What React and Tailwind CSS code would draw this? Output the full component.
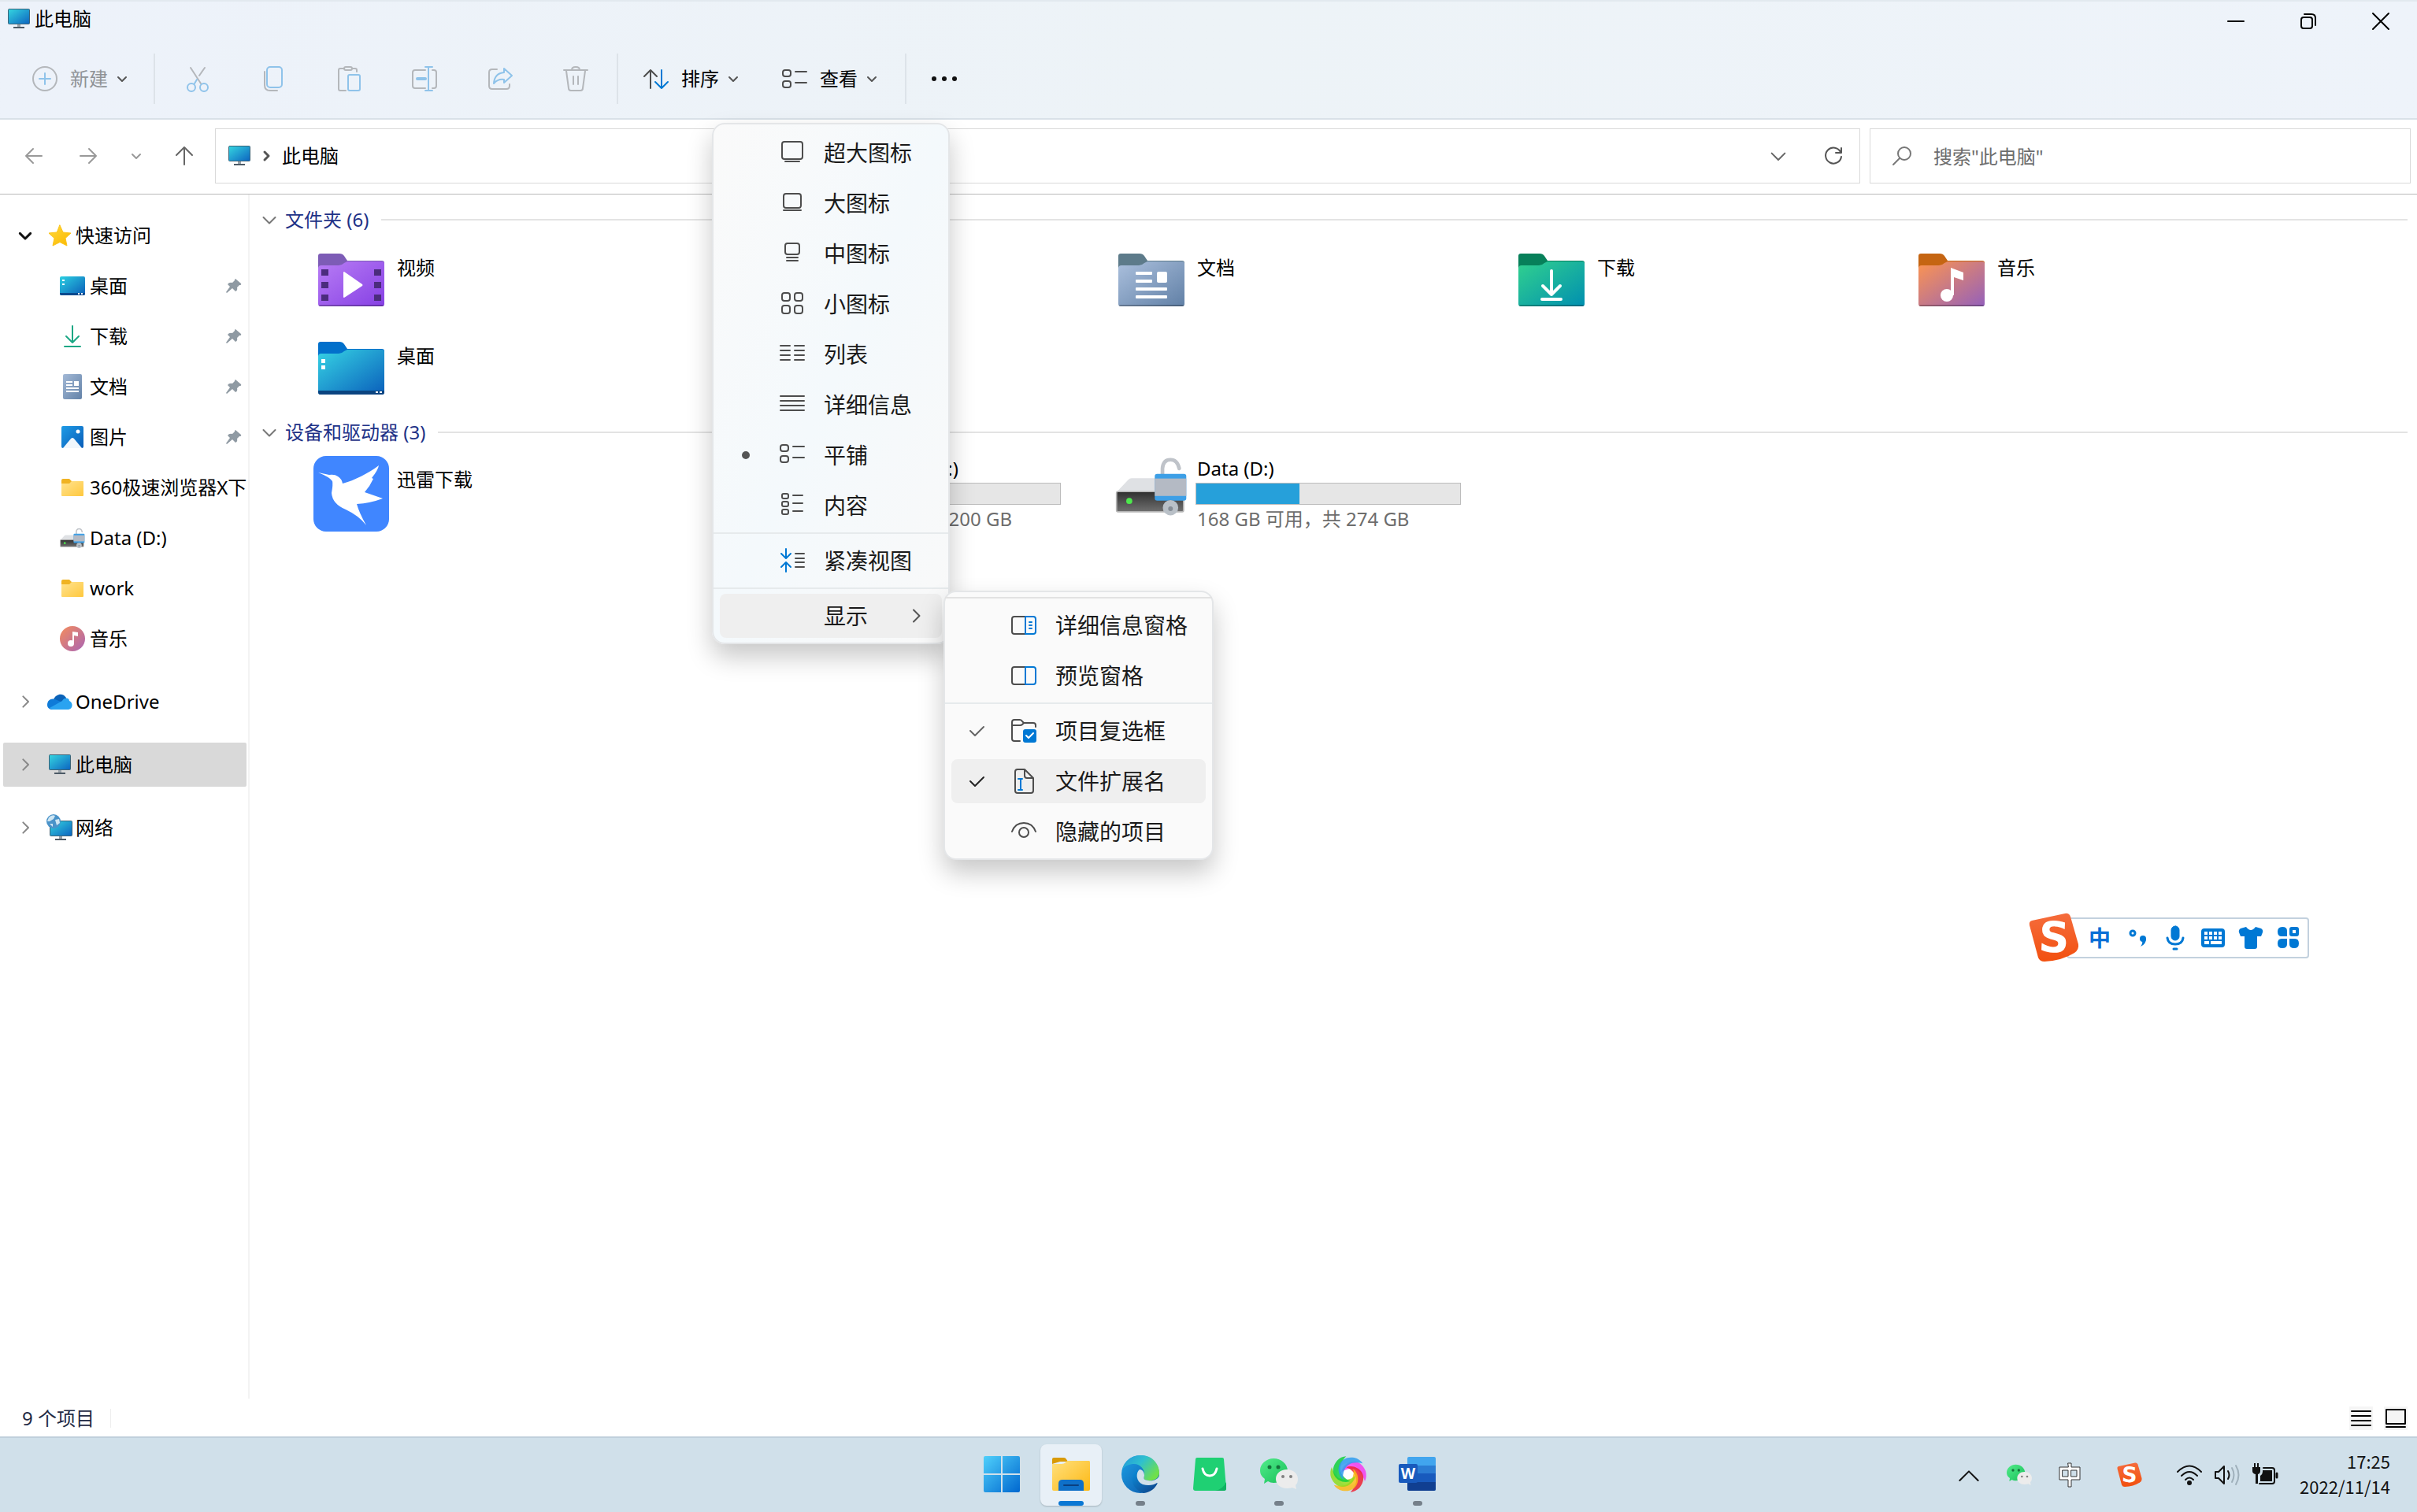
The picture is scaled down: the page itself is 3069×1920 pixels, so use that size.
import React, { useState } from "react";

// Small wrapper so every icon shares the same stroke defaults.
const Icon = ({ w = 32, h = w, vb, color = "#4d4d4d", sw = 2, children }) => (
  <svg
    width={w}
    height={h}
    viewBox={vb || `0 0 ${w} ${h}`}
    fill="none"
    stroke={color}
    strokeWidth={sw}
    strokeLinecap="round"
    strokeLinejoin="round"
    className="shrink-0 overflow-visible"
    aria-hidden="true"
  >
    {children}
  </svg>
);

const BLUE = "#0078d4";
const PALE = "#8fc3ea";
const GREY = "#b4b7bb";

const Chevron = ({ dir = "down", size = 12, color = "#555", sw = 2 }) => {
  const paths = {
    down: "M1 4 L6 9 L11 4",
    right: "M4 1 L9 6 L4 11",
    up: "M1 9 L6 4 L11 9",
  };
  return (
    <Icon w={size} vb="0 0 12 12" color={color} sw={(sw * 12) / size}>
      <path d={paths[dir]} />
    </Icon>
  );
};

const Gradient = ({ id, from, to }) => (
  <linearGradient id={id} x1="0" y1="0" x2="1" y2="1">
    <stop offset="0" stopColor={from} />
    <stop offset="1" stopColor={to} />
  </linearGradient>
);

/* ---------- system icons ---------- */

const Monitor = ({ id }) => (
  <Icon w={28} h={26} sw={1} color="none">
    <Gradient id={id} from="#35d6e0" to="#0c63c0" />
    <rect x="0.5" y="0.5" width="27" height="19" rx="1" fill={`url(#${id})`} stroke="#3c6478" />
    <rect x="12" y="20" width="4" height="3" fill="#9aa3aa" />
    <rect x="7" y="23" width="14" height="2" fill="#4c5a66" />
  </Icon>
);

const Star = () => (
  <Icon w={30} h={28} color="none">
    <Gradient id="star" from="#ffd93b" to="#fbb800" />
    <path
      d="M15 1 L19 10 L29 11 L22 17.500 L24 27 L15 22.500 L6 27 L8 17.500 L1 11 L11 10 Z"
      fill="url(#star)"
      stroke="#fcc419"
      strokeWidth="1"
    />
  </Icon>
);

const DesktopIcon = () => (
  <Icon w={32} h={25} color="none">
    <Gradient id="desk" from="#2bd0e2" to="#0b5cb8" />
    <rect width="32" height="24" rx="2" fill="url(#desk)" />
    <path d="M0 21 H32 V22 Q32 24 30 24 H2 Q0 24 0 22Z" fill="#0a4a8e" />
    <path d="M3 4h3v2h-3z M3 9h3v2h-3z M23 21h2v2h-2z M27 21h2v2h-2z" fill="#fff" />
  </Icon>
);

const DownloadIcon = () => (
  <Icon w={32} h={28} color="#1ba784" sw={2}>
    <path d="M16 1 V22 M8 14 L16 22 L24 14 M6 27 H26" />
  </Icon>
);

const DocIcon = () => (
  <Icon w={32} h={32} color="none">
    <Gradient id="doc" from="#a3b9d6" to="#6382a8" />
    <rect x="4" y="0" width="24" height="32" rx="2" fill="url(#doc)" />
    <path d="M8 9h8v2h-8z M8 13h8v2h-8z M8 17h16v2h-16z M8 21h16v2h-16z M18 9h6v6h-6z" fill="#fff" />
  </Icon>
);

const PictureIcon = () => (
  <Icon w={32} h={28} color="none">
    <Gradient id="pic" from="#1e9be6" to="#0a5db8" />
    <rect x="2" width="28" height="28" rx="2" fill="url(#pic)" />
    <path d="M4 28 L14 16 Q16 14 18 16 L28 28 Z" fill="#f1f7fc" />
    <circle cx="23" cy="7" r="2.500" fill="#fff" />
  </Icon>
);

const FolderSmall = () => (
  <Icon w={32} h={24} color="none">
    <Gradient id="fold" from="#ffe391" to="#ffc83d" />
    <path d="M2 3 Q2 1 4 1 H12 L15 4 H28 Q30 4 30 6 V12 H2Z" fill="#f0b323" />
    <path d="M2 7 H12 L15 4 H29 Q30 4 30 5 V22 Q30 23 29 23 H3 Q2 23 2 22Z" fill="url(#fold)" />
  </Icon>
);

const MusicIcon = () => (
  <Icon w={32} color="none">
    <Gradient id="mus" from="#f58d5c" to="#a964b4" />
    <circle cx="16" cy="16" r="16" fill="url(#mus)" />
    <circle cx="14" cy="22" r="4" fill="#fff" />
    <path d="M16 22 V7 L23 8 V13 L18 12 V22Z" fill="#fff" />
  </Icon>
);

const OneDrive = () => (
  <Icon w={32} h={22} color="none">
    <path d="M8 8 C11 1 20 -1 24 6 L24 14 L4 16 Z" fill="#0a62b8" />
    <path d="M0 15 C0 9 5 6 10 8 L24 14 L10 21 H7 C3 21 0 19 0 15Z" fill="#0f7bd8" />
    <path d="M19 10 C22 5 28 6 28 10 C33 12 33 20 27 21 H7 C5 21 4 20 3 19Z" fill="#2aa3f0" />
  </Icon>
);

const NetworkIcon = () => (
  <Icon w={34} h={34} color="none">
    <Gradient id="net" from="#35d6e0" to="#0c63c0" />
    <rect x="4.500" y="8.500" width="28" height="19" rx="1" fill="url(#net)" stroke="#3c6478" strokeWidth="1" />
    <rect x="16" y="28" width="4" height="3" fill="#9aa3aa" />
    <rect x="11" y="31" width="14" height="2" fill="#4c5a66" />
    <circle cx="9" cy="9" r="9" fill="#4a93c9" />
    <path d="M3 4 Q7 0 11 2 L9 6 L4 9 L1 9 Z M11 7 L16 6 L17 11 L13 14 Z M4 12 L8 12 L8 16 Z" fill="#cfe6f3" />
  </Icon>
);

const Pin = () => (
  <Icon w={20} color="none">
    <path
      d="M12 1 L19 7 Q20 9 17 9 L14 12 Q15 16 12 17 L8 13 L1 19 L0 18 L5 11 L2 8 Q4 5 8 6 L11 3 Q11 1 12 1Z"
      fill="#8f9aa3"
    />
  </Icon>
);

// Drive with an open padlock, used in the tree and on the tile.
const DriveIcon = ({ w, h, id }) => (
  <Icon w={w} h={h} vb="1255 990 216 176" color="none">
    <linearGradient id={id} x1="0" y1="0" x2="0" y2="1">
      <stop offset="0" stopColor="#2f2f2f" />
      <stop offset="1" stopColor="#707070" />
    </linearGradient>
    <path d="M1259 1097 L1294 1060 Q1298 1055 1304 1055 H1420 L1459 1097Z" fill="#dfe1e4" />
    <rect x="1259" y="1095" width="200" height="60" rx="4" fill={`url(#${id})`} stroke="#b5b5b5" strokeWidth="4" />
    <circle cx="1297" cy="1123" r="9" fill="#4de84d" />
    <path d="M1396 1044 V1026 Q1398 1000 1420 1000 Q1440 1000 1446 1026" stroke="#bfc3c9" strokeWidth="11" />
    <rect x="1373" y="1042" width="94" height="80" rx="7" fill="#3d9fe6" />
    <rect x="1373" y="1056" width="94" height="52" fill="#b4bac4" />
    <circle cx="1420" cy="1143" r="23" fill="#b9c0c7" />
    <circle cx="1420" cy="1146" r="7" fill="#858d96" />
  </Icon>
);

/* ---------- big folders ---------- */

const folderColors = {
  video: ["#7d5cb6", "#b87df5", "#8640e4"],
  picture: ["#0b62bd", "#35a8ea", "#0b62bd"],
  doc: ["#5d7b8a", "#abc0dd", "#6180a6"],
  download: ["#07805a", "#31d18e", "#008fb0"],
  music: ["#c56512", "#fd9550", "#9460bb"],
  desktop: ["#0270cb", "#36d3e4", "#0a5fbb"],
};

const folderArt = {
  video: (
    <>
      <path
        d="M4 20h9v8h-9z M4 36h9v8h-9z M4 52h9v8h-9z M71 20h9v8h-9z M71 36h9v8h-9z M71 52h9v8h-9z"
        fill="#4b2c7d"
      />
      <path d="M33 23 L56 39 Q57 40 56 41 L33 56 Q32 56 32 55 V24Q32 23 33 23Z" fill="#fff" />
    </>
  ),
  picture: (
    <>
      <path d="M18 60 L38 36 Q42 32 46 36 L66 60Z" fill="#fff" />
      <circle cx="60" cy="28" r="5" fill="#fff" />
    </>
  ),
  doc: (
    <g fill="#fff">
      <rect x="22" y="23" width="21" height="4" rx="1" />
      <rect x="22" y="33" width="21" height="4" rx="1" />
      <rect x="22" y="43" width="40" height="4" rx="1" />
      <rect x="22" y="53" width="40" height="4" rx="1" />
      <rect x="49" y="23" width="13" height="14" rx="2" />
    </g>
  ),
  download: (
    <path d="M42 22 V52 M31 41 L42 52 L53 41 M30 58 H54" stroke="#fff" strokeWidth="4" />
  ),
  music: (
    <>
      <ellipse cx="36" cy="53" rx="8" ry="8" fill="#fff" />
      <path d="M41 53 V18 L57 24 V34 L45 30 V53Z" fill="#fff" />
    </>
  ),
  desktop: (
    <>
      <path d="M0 62 H84 V64 Q84 67 81 67 H3 Q0 67 0 64Z" fill="#0b4480" />
      <path d="M4 22h5v5h-5z M4 30h5v5h-5z M73 63h3v2h-3z M78 63h3v2h-3z" fill="#fff" />
    </>
  ),
};

const Folder = ({ kind }) => {
  const [tab, from, to] = folderColors[kind];
  return (
    <Icon w={84} h={68} color="none">
      <Gradient id={`big-${kind}`} from={from} to={to} />
      <path d="M0 3 Q0 0 3 0 H27 Q31 0 33 3 L37 9 H81 Q84 9 84 12 V30 H0Z" fill={tab} />
      <path
        d="M0 19 Q0 15 4 15 H26 Q30 15 33 12 L37 10 H81 Q84 10 84 13 V64 Q84 67 81 67 H3 Q0 67 0 64Z"
        fill={`url(#big-${kind})`}
      />
      <path d="M2 66 H82" stroke="#000" strokeOpacity="0.25" strokeWidth="2" />
      {folderArt[kind]}
    </Icon>
  );
};

const Thunder = () => (
  <Icon w={96} color="none">
    <rect width="96" height="96" rx="16" fill="#4086ff" />
    <path
      d="M6 21 L20 24 Q27 23 31 26 Q36 29 37 35 C52 31 70 22 83 12 Q82 18 74 28 L76 29 Q72 38 65 46 L88 54 Q72 60 55 61 Q58 72 67 88 Q58 76 41 68 Q24 61 23 47 Q25 36 24 32 Q21 27 6 21Z"
      fill="#fff"
    />
  </Icon>
);

/* ---------- toolbar ---------- */

const CutIcon = () => (
  <Icon color={GREY}>
    <path d="M7 2 L20 22 M25 2 L18 12" />
    <path d="M15 17 L12 22" stroke={PALE} />
    <circle cx="8" cy="27" r="5" stroke={PALE} />
    <circle cx="24" cy="27" r="5" stroke={PALE} />
  </Icon>
);

const CopyIcon = () => (
  <Icon color={GREY}>
    <path d="M5 7 V24 Q5 31 12 31 H21" />
    <rect x="8" y="1" width="19" height="26" rx="4" stroke={PALE} />
  </Icon>
);

const PasteIcon = () => (
  <Icon color={GREY}>
    <path d="M10 3 H5 Q3 3 3 5 V29 Q3 31 5 31 H12 M20 3 H24 Q26 3 26 5 V7" />
    <rect x="10" y="1" width="10" height="4" rx="2" />
    <rect x="15" y="11" width="15" height="20" rx="2" stroke={PALE} />
  </Icon>
);

const RenameIcon = () => (
  <Icon color={GREY}>
    <path d="M17 5 H4 Q1 5 1 8 V25 Q1 28 4 28 H17 M26 5 H28 Q31 5 31 8 V25 Q31 28 28 28 H26" />
    <path d="M21 1 V31 M17 1 H26 M17 31 H26" stroke={PALE} />
    <path d="M7 16 H17" stroke={PALE} strokeWidth="4" />
  </Icon>
);

const ShareIcon = () => (
  <Icon color={GREY}>
    <path d="M12 4 H6 Q2 4 2 8 V25 Q2 29 6 29 H24 Q28 29 28 25 V23" />
    <path d="M21 3 L31 12 L21 21 V17 Q13 16 8 22 Q9 9 21 8 Z" stroke={PALE} />
  </Icon>
);

const TrashIcon = () => (
  <Icon color={GREY}>
    <path d="M1 5 H31 M4 6 L7 28 Q7 31 10 31 H22 Q25 31 25 28 L28 6 M11 5 Q11 1 16 1 Q21 1 21 5 M13 13 V23 M19 13 V23" />
  </Icon>
);

const SortIcon = () => (
  <Icon>
    <path d="M9 28 V5 M1 13 L9 5 L17 13" />
    <path d="M23 5 V28 M15 20 L23 28 L31 20" stroke={BLUE} />
  </Icon>
);

const TilesIcon = () => (
  <Icon>
    <rect x="1" y="5" width="10" height="8" rx="3" />
    <rect x="1" y="19" width="10" height="8" rx="3" />
    <path d="M17 7 H31 M17 21 H31" />
  </Icon>
);

const fileActions = [
  ["剪切", CutIcon],
  ["复制", CopyIcon],
  ["粘贴", PasteIcon],
  ["重命名", RenameIcon],
  ["共享", ShareIcon],
  ["删除", TrashIcon],
];

const Divider = () => <div className="h-16 w-0.5 bg-[#dde3e9]" />;

const TitleBar = () => (
  <div className="flex h-12 items-center justify-between">
    <div className="flex items-center gap-1.5 pl-2.5">
      <Monitor id="mon-title" />
      <h1 className="leading-8">此电脑</h1>
    </div>
    <div className="flex pt-1.5">
      <button className="flex h-10 w-[92px] items-center justify-center" aria-label="最小化">
        <Icon w={20} color="#000">
          <path d="M0 10 H20" />
        </Icon>
      </button>
      <button className="flex h-10 w-[92px] items-center justify-center" aria-label="还原">
        <Icon w={20} color="#000">
          <rect x="1" y="5" width="14" height="14" rx="3" />
          <path d="M5 1 H14 Q19 1 19 6 V15" />
        </Icon>
      </button>
      <button className="flex h-10 w-[92px] items-center justify-center" aria-label="关闭">
        <Icon w={20} color="#000">
          <path d="M0 0 L20 20 M20 0 L0 20" />
        </Icon>
      </button>
    </div>
  </div>
);

const Toolbar = () => (
  <div className="flex h-[102px] items-center pt-px pl-[41px]">
    <button className="flex items-center gap-4 text-[#8f9296]">
      <Icon color={GREY}>
        <circle cx="16" cy="16" r="15" />
        <path d="M16 9 V23 M9 16 H23" stroke={PALE} />
      </Icon>
      <span className="flex items-center gap-3 leading-8">
        新建 <Chevron />
      </span>
    </button>
    <div className="flex items-center pl-[34px]">
      <Divider />
      <div className="flex pr-1 pl-1.5">
        {fileActions.map(([label, Glyph]) => (
          <button key={label} aria-label={label} className="flex w-24 justify-center">
            <Glyph />
          </button>
        ))}
      </div>
      <Divider />
    </div>
    <div className="flex items-center gap-14 pr-9 pl-8">
      <button className="flex items-center gap-4">
        <SortIcon />
        <span className="flex items-center gap-3 leading-8">
          排序 <Chevron />
        </span>
      </button>
      <button className="flex items-center gap-4">
        <TilesIcon />
        <span className="flex items-center gap-3 leading-8">
          查看 <Chevron />
        </span>
      </button>
    </div>
    <Divider />
    <button aria-label="更多" className="flex w-24 justify-center">
      <Icon color="none">
        <circle cx="3" cy="16" r="3" fill="#111" />
        <circle cx="16" cy="16" r="3" fill="#111" />
        <circle cx="29" cy="16" r="3" fill="#111" />
      </Icon>
    </button>
  </div>
);

/* ---------- address row ---------- */

const AddressRow = ({ query, setQuery }) => (
  <div className="flex h-[95px] items-center border-b border-[#b9b9b9] bg-white pr-2 pb-0.5">
    <div className="flex w-[273px] items-center pl-8">
      <button aria-label="后退" className="w-[69px]">
        <Icon w={22} color="#999">
          <path d="M1 11 H21 M10 2 L1 11 L10 20" />
        </Icon>
      </button>
      <button aria-label="前进" className="w-[66px]">
        <Icon w={22} color="#999">
          <path d="M1 11 H21 M12 2 L21 11 L12 20" />
        </Icon>
      </button>
      <button aria-label="最近浏览的位置" className="w-14">
        <Chevron color="#999" />
      </button>
      <button aria-label="上移">
        <Icon w={22} h={24} color="#666">
          <path d="M11 23 V1 M1 11 L11 1 L21 11" />
        </Icon>
      </button>
    </div>
    <div className="flex h-[70px] flex-1 items-center justify-between border border-[#d9d9d9] pr-[21px] pl-4">
      <div className="flex items-center gap-3.5">
        <Monitor id="mon-addr" />
        <Chevron dir="right" color="#555" sw={3} />
        <a href="#pc" className="leading-8">
          此电脑
        </a>
      </div>
      <div className="flex items-center gap-12">
        <button aria-label="以前的位置">
          <Chevron size={20} color="#666" sw={2} />
        </button>
        <button aria-label="刷新">
          <Icon w={24} color="#555">
            <path d="M21 7 A10 10 0 1 0 22 13 M22 2 V8 H15" />
          </Icon>
        </button>
      </div>
    </div>
    <label className="ml-3 flex h-[70px] w-[687px] items-center gap-7 border border-[#d9d9d9] pl-7">
      <Icon w={24} color="#777">
        <circle cx="15" cy="9" r="8" />
        <path d="M9 15 L1 23" />
      </Icon>
      <input
        type="text"
        aria-label="搜索"
        value={query}
        onChange={(e) => setQuery(e.target.value)}
        placeholder={'搜索"此电脑"'}
        className="h-10 flex-1 leading-8 outline-none placeholder:text-[#6d6d6d]"
      />
    </label>
  </div>
);

/* ---------- tree ---------- */

const quickAccess = [
  { name: "桌面", icon: <DesktopIcon />, pinned: true },
  { name: "下载", icon: <DownloadIcon />, pinned: true },
  { name: "文档", icon: <DocIcon />, pinned: true },
  { name: "图片", icon: <PictureIcon />, pinned: true },
  { name: "360极速浏览器X下", icon: <FolderSmall /> },
  { name: "Data (D:)", icon: <DriveIcon w={32} h={26} id="drv-s" /> },
  { name: "work", icon: <FolderSmall /> },
  { name: "音乐", icon: <MusicIcon /> },
];

const TreeRoot = ({ name, icon, open, active }) => (
  <div className="flex h-16 items-center pr-0.5 pl-1">
    <button
      className={`flex h-14 w-full items-center text-left ${active ? "rounded-xs bg-[#d9d9d9]" : ""}`}
    >
      <span className="flex w-14 justify-center">
        <Chevron
          dir={open ? "down" : "right"}
          size={16}
          color={open ? "#111" : "#888"}
          sw={open ? 3 : 2}
        />
      </span>
      <span className="flex w-8 justify-center">{icon}</span>
      <span className="ml-1 leading-8 whitespace-nowrap">{name}</span>
    </button>
  </div>
);

const Sidebar = () => (
  <nav className="flex w-[317px] shrink-0 flex-col gap-4 border-r-2 border-[#f3f3f3] pt-5">
    <div>
      <TreeRoot name="快速访问" icon={<Star />} open />
      <ul>
        {quickAccess.map((item) => (
          <li key={item.name} className="flex h-16 items-center pr-2 pl-[76px]">
            <a href="#item" className="flex min-w-0 flex-1 items-center">
              <span className="flex w-8 shrink-0 justify-center">{item.icon}</span>
              <span className="ml-1.5 leading-8 whitespace-nowrap">{item.name}</span>
            </a>
            {item.pinned && <Pin />}
          </li>
        ))}
      </ul>
    </div>
    <TreeRoot name="OneDrive" icon={<OneDrive />} />
    <TreeRoot name="此电脑" icon={<Monitor id="mon-tree" />} active />
    <TreeRoot name="网络" icon={<NetworkIcon />} />
  </nav>
);

/* ---------- content ---------- */

const folders = [
  { kind: "video", name: "视频" },
  { kind: "picture" },
  { kind: "doc", name: "文档" },
  { kind: "download", name: "下载" },
  { kind: "music", name: "音乐" },
  { kind: "desktop", name: "桌面" },
];

const GroupHeader = ({ title }) => (
  <div className="flex h-10 items-center gap-4 pr-3 pl-4">
    <button className="flex items-center gap-[11px] text-[#1e3287]">
      <Chevron size={18} color="#777" />
      <span className="leading-8">{title}</span>
    </button>
    <div className="h-0.5 flex-1 bg-[#e3e3e3]" />
  </div>
);

const Drive = ({ name, free, used, id, tucked }) => (
  <li className="flex h-28 items-start gap-2 pt-2">
    <span className="flex w-24 justify-center pt-0.5">
      <DriveIcon w={92} h={76} id={id} />
    </span>
    <div className="w-[337px]">
      <p className={`pl-0.5 leading-9 ${tucked ? "w-[207px] text-right" : ""}`}>{name}</p>
      <div className="h-7 border border-[#bcbcbc] bg-[#e6e6e6]">
        <div className="h-full bg-[#26a0da]" style={{ width: `${used}%` }} />
      </div>
      <p className={`pl-0.5 leading-9 text-[#6d6d6d] ${tucked ? "w-[275px] text-right" : ""}`}>
        {free}
      </p>
    </div>
  </li>
);

const Content = () => (
  <main className="min-w-0 flex-1 pt-3">
    <GroupHeader title="文件夹 (6)" />
    <ul className="grid grid-cols-[repeat(auto-fill,508px)] pt-0.5 pl-[81px]">
      {folders.map(({ kind, name }) => (
        <li key={kind} className="flex h-28 items-start gap-2.5 pt-[21px]">
          <span className="flex w-24 justify-center">
            <Folder kind={kind} />
          </span>
          {name && <span className="leading-9">{name}</span>}
        </li>
      ))}
    </ul>
    <div className="pt-1">
      <GroupHeader title="设备和驱动器 (3)" />
    </div>
    <ul className="grid grid-cols-[repeat(auto-fill,508px)] pl-[81px]">
      <li className="flex h-28 items-start gap-2.5 pt-2.5">
        <Thunder />
        <span className="pt-3 leading-9">迅雷下载</span>
      </li>
      <Drive name=":)" free="200 GB" used={46} id="drv-c" tucked />
      <Drive name="Data (D:)" free="168 GB 可用，共 274 GB" used={39} id="drv-d" />
    </ul>
  </main>
);

const StatusBar = () => (
  <div className="flex h-12 items-center justify-between pt-0.5 pr-3 pl-7">
    <div className="flex items-center gap-5">
      <span className="leading-8 text-[#1f2a44]">9 个项目</span>
      <span className="h-6 w-px bg-[#eeeeee]" />
    </div>
    <div className="flex gap-3.5">
      <button aria-label="详细信息" className="bg-[#f5f5f5] p-0.5">
        <Icon w={26} color="#000">
          <path d="M1 4 H25 M1 10 H25 M1 16 H25 M1 22 H25" />
        </Icon>
      </button>
      <button aria-label="大缩略图" className="bg-[#f5f5f5] p-0.5">
        <Icon w={26} color="#000">
          <rect x="1" y="2" width="24" height="18" />
          <path d="M1 24 H25" />
        </Icon>
      </button>
    </div>
  </div>
);

/* ---------- menus ---------- */

const viewItems = [
  {
    label: "超大图标",
    art: (
      <>
        <rect x="3" y="2" width="26" height="22" rx="3" />
        <path d="M7 27 H25" />
      </>
    ),
  },
  {
    label: "大图标",
    art: (
      <>
        <rect x="5" y="4" width="22" height="18" rx="3" />
        <path d="M5 25 H27" />
      </>
    ),
  },
  {
    label: "中图标",
    art: (
      <>
        <rect x="7" y="3" width="18" height="14" rx="3" />
        <path d="M9 21 H23 M9 25 H23" />
      </>
    ),
  },
  {
    label: "小图标",
    art: (
      <>
        <rect x="3" y="2" width="10" height="10" rx="3" />
        <rect x="19" y="2" width="10" height="10" rx="3" />
        <rect x="3" y="18" width="10" height="10" rx="3" />
        <rect x="19" y="18" width="10" height="10" rx="3" />
      </>
    ),
  },
  {
    label: "列表",
    art: (
      <path d="M1 5 H13 M1 11 H13 M1 17 H13 M1 23 H13 M19 5 H31 M19 11 H31 M19 17 H31 M19 23 H31" />
    ),
  },
  { label: "详细信息", art: <path d="M1 5 H31 M1 11 H31 M1 17 H31 M1 23 H31" /> },
  {
    label: "平铺",
    dot: true,
    art: (
      <>
        <rect x="1" y="3" width="10" height="8" rx="3" />
        <rect x="1" y="17" width="10" height="8" rx="3" />
        <path d="M17 5 H31 M17 19 H31" />
      </>
    ),
  },
  {
    label: "内容",
    art: (
      <>
        <rect x="3" y="1" width="8" height="6" rx="2" />
        <rect x="3" y="11" width="8" height="6" rx="2" />
        <rect x="3" y="21" width="8" height="6" rx="2" />
        <path d="M17 3 H29 M17 13 H29 M17 23 H29" />
      </>
    ),
  },
];

const CheckMark = ({ color }) => (
  <Icon w={20} color={color}>
    <path d="M1 10 L7 16 L18 5" />
  </Icon>
);

const MenuItem = ({ label, art, mark, active, arrow }) => (
  <li className="flex h-16 items-center px-2">
    <button
      role="menuitem"
      className={`flex h-14 w-full items-center rounded-lg text-left ${active ? "bg-[#efefef]" : ""}`}
    >
      <span className="flex w-[66px] justify-center">{mark}</span>
      <span className="mr-6 flex w-[42px] justify-end">{art && <Icon>{art}</Icon>}</span>
      <span className="flex-1 text-[28px] leading-9 whitespace-nowrap">{label}</span>
      {arrow && (
        <span className="mr-6">
          <Chevron dir="right" size={18} />
        </span>
      )}
    </button>
  </li>
);

const Separator = () => <li role="separator" className="my-0.5 h-0.5 bg-[#e6eaec]" />;

const menuBox = "absolute rounded-2xl border-2 border-[#e4e6e8] text-[#1a1a1a] shadow-[0_16px_32px_rgba(0,0,0,0.22)]";

const ViewMenu = () => (
  <ul
    role="menu"
    className={`${menuBox} top-[156px] left-[904px] w-[302px] bg-linear-to-br from-[#fafafa] via-[#f4f9fc] to-[#f9f9f9] pt-1 pb-0.5`}
  >
    {viewItems.map((item) => (
      <MenuItem
        key={item.label}
        label={item.label}
        art={item.art}
        mark={item.dot && <span className="size-2.5 rounded-full bg-[#555]" />}
      />
    ))}
    <Separator />
    <MenuItem
      label="紧凑视图"
      art={
        <>
          <path d="M8 1 V12 M2 7 L8 13 L14 7 M8 30 V19 M2 24 L8 18 L14 24" stroke={BLUE} />
          <path d="M20 7 H31 M20 13 H31 M20 18 H31 M20 24 H31" />
        </>
      }
    />
    <Separator />
    <MenuItem label="显示" active arrow />
  </ul>
);

const ShowMenu = () => (
  <ul role="menu" className={`${menuBox} top-[750px] left-[1198px] w-[343px] bg-[#fafafa] pb-0.5`}>
    <li role="separator" className="mt-1.5 mb-0.5 h-0.5 bg-[#e2e2e2]" />
    <MenuItem
      label="详细信息窗格"
      art={
        <>
          <path d="M18 5 H4 Q1 5 1 8 V24 Q1 27 4 27 H18" />
          <path d="M18 5 H28 Q31 5 31 8 V24 Q31 27 28 27 H18 Z M23 12 H26 M23 16 H26 M23 20 H26" stroke={BLUE} />
        </>
      }
    />
    <MenuItem
      label="预览窗格"
      art={
        <>
          <path d="M18 5 H4 Q1 5 1 8 V24 Q1 27 4 27 H18" />
          <path d="M18 5 H28 Q31 5 31 8 V24 Q31 27 28 27 H18 Z" stroke={BLUE} />
        </>
      }
    />
    <Separator />
    <MenuItem
      label="项目复选框"
      mark={<CheckMark color="#666" />}
      art={
        <>
          <path d="M11 29 H4 Q1 29 1 26 V5 Q1 2 4 2 H11 Q13 2 14 4 L16 6 H28 Q31 6 31 9 V11 M1 9 H11 Q13 9 14 8 L16 6" />
          <rect x="15" y="14" width="17" height="17" rx="3" fill={BLUE} stroke="none" />
          <path d="M19 22 L22 25 L28 19" stroke="#fff" />
        </>
      }
    />
    <MenuItem
      label="文件扩展名"
      active
      mark={<CheckMark color="#222" />}
      art={
        <>
          <path d="M17 1 H8 Q5 1 5 4 V28 Q5 31 8 31 H25 Q28 31 28 28 V12 L17 1 V9 Q17 12 20 12 H28" />
          <path d="M12 13 V27 M9 13 H14 M9 27 H14" stroke={BLUE} />
        </>
      }
    />
    <MenuItem
      label="隐藏的项目"
      art={
        <>
          <path d="M1 16 Q5 5 16 5 Q27 5 31 16" />
          <circle cx="16" cy="17" r="6" />
        </>
      }
    />
  </ul>
);

/* ---------- input method bar ---------- */

const Sogou = ({ size }) => (
  <Icon w={size} vb="0 0 64 64" color="none">
    <linearGradient id={`sg${size}`} x1="0" y1="0" x2="0" y2="1">
      <stop offset="0" stopColor="#f56c3c" />
      <stop offset="1" stopColor="#f2500f" />
    </linearGradient>
    <path
      d="M4 10 L46 1 Q51 0 53 5 L63 40 Q64 47 58 51 Q42 61 20 62 Q14 62 12 57 L1 16 Q0 11 4 10Z"
      fill={`url(#sg${size})`}
    />
    <text
      x="32"
      y="50"
      textAnchor="middle"
      fontSize="54"
      fontWeight="700"
      fontFamily="DejaVu Sans, sans-serif"
      fill="#fff"
      transform="rotate(3 32 32)"
    >
      S
    </text>
  </Icon>
);

const ImeBar = () => (
  <div className="absolute top-[1159px] right-[137px] flex items-center">
    <div className="z-10">
      <Sogou size={64} />
    </div>
    <div className="-ml-4 flex h-[52px] items-center rounded-sm border-2 border-[#c3d1de] bg-white pl-4 text-[#0a6fd6]">
      <button className="w-12 text-center text-[28px] leading-9 font-bold">中</button>
      <button className="flex w-12 justify-center" aria-label="中文标点">
        <Icon w={24} h={24} color={BLUE} sw={3}>
          <circle cx="6" cy="6" r="3" />
          <circle cx="19" cy="13" r="4" fill={BLUE} stroke="none" />
          <path d="M23 13 Q23 20 16 23 Q19 19 18 15Z" fill={BLUE} stroke="none" />
        </Icon>
      </button>
      <button className="flex w-12 justify-center" aria-label="语音">
        <Icon w={24} h={32} color={BLUE} sw={3}>
          <rect x="7" y="1" width="10" height="18" rx="5" fill={BLUE} stroke={BLUE} strokeWidth="1" />
          <path d="M2 16 Q3 24 12 24 Q21 24 22 16 M10 30 H14" />
        </Icon>
      </button>
      <button className="flex w-12 justify-center" aria-label="软键盘">
        <Icon w={30} h={24} color="none">
          <rect width="30" height="24" rx="4" fill={BLUE} />
          <path
            d="M4 4h4v4h-4z M10 4h4v4h-4z M16 4h4v4h-4z M22 4h4v4h-4z M4 10h4v4h-4z M10 10h4v4h-4z M16 10h4v4h-4z M22 10h4v4h-4z M4 16h6v4h-6z M12 16h14v4h-14z"
            fill="#fff"
          />
        </Icon>
      </button>
      <button className="flex w-12 justify-center" aria-label="皮肤">
        <Icon w={30} h={28} color="none">
          <path
            d="M9 0 Q15 8 21 0 L28 2 Q31 4 30 7 L28 12 L23 12 V25 Q23 28 20 28 H10 Q7 28 7 25 V12 L2 12 L0 7 Q-1 4 2 2Z"
            fill={BLUE}
          />
        </Icon>
      </button>
      <button className="flex w-12 justify-center" aria-label="工具箱">
        <Icon w={28} color="none">
          <path d="M12 12 H5 Q0 12 0 6 Q0 0 6 0 Q12 0 12 5Z" fill={BLUE} />
          <path d="M12 15 H5 Q0 15 0 21 Q0 27 6 27 Q12 27 12 22Z" fill={BLUE} />
          <path d="M15 15 H22 Q27 15 27 21 Q27 27 21 27 Q15 27 15 22Z" fill={BLUE} />
          <rect x="15" width="12" height="12" rx="3" fill={BLUE} />
          <rect x="19" y="4" width="4" height="4" fill="#fff" />
        </Icon>
      </button>
    </div>
  </div>
);

/* ---------- taskbar ---------- */

const Windows = () => (
  <Icon w={46} color="none">
    <Gradient id="win" from="#4fd0fb" to="#0067cf" />
    <path d="M2 0H22V22H0V2Q0 0 2 0Z M24 0H44Q46 0 46 2V22H24Z M0 24H22V46H2Q0 46 0 44Z M24 24H46V44Q46 46 44 46H24Z" fill="url(#win)" />
  </Icon>
);

const Explorer = () => (
  <Icon w={48} h={44} color="none">
    <Gradient id="exf" from="#ffe07d" to="#fdb813" />
    <path d="M0 3 Q0 1 2 1 H15 Q17 1 18 3 L20 6 H10 L0 9Z" fill="#d99a06" />
    <path d="M0 9 H12 Q15 9 17 7 L19 5 H47 Q48 5 48 7 V41 Q48 43 46 43 H2 Q0 43 0 41Z" fill="url(#exf)" />
    <path d="M8 43 V34 Q8 29 13 29 H35 Q40 29 40 34 V43Z" fill="#0f70c8" />
    <path d="M15 36 H33" stroke="#0a3f80" />
  </Icon>
);

const Edge = () => (
  <Icon w={48} color="none">
    <Gradient id="ed1" from="#1da1e6" to="#0a55a8" />
    <Gradient id="ed2" from="#0c8fdc" to="#0e3f85" />
    <linearGradient id="ed3" x1="0" y1="0" x2="1" y2="0.600">
      <stop offset="0" stopColor="#2296dc" />
      <stop offset="0.500" stopColor="#2fc0cf" />
      <stop offset="1" stopColor="#6fe04a" />
    </linearGradient>
    <circle cx="24" cy="24" r="24" fill="url(#ed1)" />
    <path d="M21 18 C10 22 10 42 28 48 C37 47 43 42 46 35 C38 38 22 37 19 28Z" fill="url(#ed2)" />
    <path d="M1 18 C5 4 16 0 25 0 C40 0 48 12 48 22 C48 30 40 33 34 32 C28 31 28 30 29 26 C30 18 24 11 16 11 C10 11 5 13 1 18Z" fill="url(#ed3)" />
    <path d="M23 18 C18 22 18 33 27 37 C34 39 41 38 45 35 L49 36 L49 24 C47 31 40 33 34 32 C28 31 28 30 29 26 C29 22 27 18 23 18Z" fill="#d0e0ea" />
  </Icon>
);

const Store = () => (
  <Icon w={42} color="none">
    <path d="M5 0 H37 Q39 0 39 2 L42 39 Q42 42 39 42 H3 Q0 42 0 39 L3 2 Q3 0 5 0Z" fill="#1fd073" />
    <path d="M42 31 Q38 40 28 42 H39 Q42 42 42 39Z" fill="#12b263" />
    <path d="M12 14 Q14 23 21 23 Q28 23 30 14" stroke="#fff" strokeWidth="3" />
  </Icon>
);

const WeChat = ({ size }) => (
  <Icon w={size} vb="0 0 48 42" h={(size * 42) / 48} color="none">
    <Gradient id={`wc${size}`} from="#52ec8b" to="#17bf58" />
    <path d="M17 1 C27 1 35 8 35 17 C35 26 27 32 17 32 Q13 32 10 30 L5 33 L6 27 C2 24 0 21 0 16 C0 8 8 1 17 1Z" fill={`url(#wc${size})`} />
    <circle cx="12" cy="12" r="2.500" fill="#15733b" />
    <circle cx="23" cy="12" r="2.500" fill="#15733b" />
    <path d="M34 15 C42 15 48 20 48 27 Q48 32 45 35 L46 40 L41 38 Q38 39 34 39 C26 39 20 34 20 27 C20 20 26 15 34 15Z" fill="#ececec" />
    <circle cx="29" cy="24" r="2" fill="#808080" />
    <circle cx="39" cy="24" r="2" fill="#808080" />
  </Icon>
);

const petals = ["#f43bf0", "#ee2233", "#fbb916", "#8fdc1c", "#12cf3c", "#2f9cf0"];

const ColorWheel = () => (
  <Icon w={48} color="none">
    <circle cx="24" cy="24" r="14" fill="#fff" />
    {petals.map((fill, i) => (
      <path
        key={fill}
        d="M15 22 C17 8 38 0 46 20 Q48 27 45 33 C42 22 35 16 26 17 Q19 18 15 22Z"
        fill={fill}
        transform={`rotate(${i * 60} 24 24)`}
        opacity="0.85"
      />
    ))}
  </Icon>
);

const Word = () => (
  <Icon w={48} h={44} color="none">
    <rect x="11" y="0" width="36" height="43" rx="2" fill="#41a5ee" />
    <rect x="11" y="11" width="36" height="11" fill="#2b7cd3" />
    <rect x="11" y="21" width="36" height="11" fill="#185abd" />
    <path d="M11 32 H47 V41 Q47 43 45 43 H13 Q11 43 11 41Z" fill="#103f91" />
    <rect x="0" y="9" width="24" height="24" rx="2" fill="#185abd" />
    <text x="12" y="28" textAnchor="middle" fontSize="19" fontWeight="700" fontFamily="Open Sans, sans-serif" fill="#fff">
      W
    </text>
  </Icon>
);

const apps = [
  { name: "开始", icon: <Windows /> },
  { name: "文件资源管理器", icon: <Explorer />, active: true },
  { name: "Edge", icon: <Edge />, running: true },
  { name: "应用商店", icon: <Store /> },
  { name: "微信", icon: <WeChat size={48} />, running: true },
  { name: "360极速浏览器X", icon: <ColorWheel /> },
  { name: "Word", icon: <Word />, running: true },
];

const Taskbar = () => (
  <footer className="flex h-24 items-center border-t-2 border-[#c0d0dc] bg-[#d0e0ea]">
    <div className="flex-1 pl-9" />
    <div className="flex">
      {apps.map((app) => (
        <div key={app.name} className="flex w-[88px] justify-center">
          <button
            aria-label={app.name}
            className={`flex size-[78px] flex-col items-center justify-between rounded-lg pt-3.5 ${
              app.active ? "bg-[#e8f0f7] shadow-[0_1px_2px_rgba(0,0,0,0.2)]" : ""
            }`}
          >
            <span className="flex h-12 items-center">{app.icon}</span>
            {app.active && <span className="h-1.5 w-8 rounded-full bg-[#0a78d4]" />}
            {app.running && <span className="h-1.5 w-3 rounded-full bg-[#75808a]" />}
          </button>
        </div>
      ))}
    </div>
    <div className="flex flex-1 items-center justify-end pr-[34px]">
      <button aria-label="显示隐藏的图标" className="flex w-16 justify-center">
        <Chevron dir="up" size={28} color="#111" sw={2} />
      </button>
      <button aria-label="微信" className="flex w-16 justify-center">
        <WeChat size={32} />
      </button>
      <button aria-label="输入法" className="flex w-16 justify-center">
        <Icon w={28} h={32} sw={1} color="#333">
          <path d="M12 1 H16 V6 H27 V22 H16 V31 H12 V22 H1 V6 H12Z" fill="#fff" />
          <path d="M5 10 H12 V18 H5Z M16 10 H23 V18 H16Z" fill="#d0e0ea" />
        </Icon>
      </button>
      <button aria-label="搜狗输入法" className="flex w-22 justify-center">
        <Sogou size={32} />
      </button>
      <button aria-label="网络、音量和电池" className="flex gap-4 pl-4">
        <Icon color="#111">
          <path d="M1 12 Q16 -3 31 12 M6 17 Q16 7 26 17 M11 22 Q16 17 21 22" />
          <circle cx="16" cy="26" r="2" fill="#111" />
        </Icon>
        <Icon color="#111">
          <path d="M1 12 H5 L12 5 V27 L5 20 H1Z M17 11 Q20 16 17 21" />
          <path d="M22 7 Q27 16 22 25 M27 4 Q34 16 27 28" stroke="#9fb0bb" />
        </Icon>
        <Icon color="#111">
          <path d="M14 7 H25 Q28 7 28 10 V24 Q28 27 25 27 H9" />
          <path d="M13 10 H25 V24 H10 V17 Q13 15 13 12Z" fill="#111" stroke="none" />
          <path d="M31 14 V19" strokeWidth="3" />
          <path d="M0 6 H10 V11 Q10 14 7 15 V27 H4 V15 Q0 14 0 11Z M2 1h2v5h-2z M6 1h2v5h-2z" fill="#111" stroke="none" />
        </Icon>
      </button>
      <button className="ml-7 pb-1 text-right font-['Noto_Sans_CJK_SC',sans-serif] text-[22px] leading-8 text-[#111]">
        <span className="block">17:25</span>
        <span className="block">2022/11/14</span>
      </button>
    </div>
  </footer>
);

const App = () => {
  const [query, setQuery] = useState("");

  return (
    <div className="relative flex h-screen min-h-[1200px] flex-col overflow-hidden bg-white font-['Noto_Sans','Noto_Sans_CJK_SC',sans-serif] text-[24px] text-black">
      <header className="border-y-2 border-t-[#e2e9ef] border-b-[#d9e1e8] bg-linear-to-r from-[#edf2fa] via-[#edf3f7] to-[#eef3fa]">
        <div className="-mt-0.5">
          <TitleBar />
          <Toolbar />
        </div>
      </header>
      <AddressRow query={query} setQuery={setQuery} />
      <div className="flex min-h-0 flex-1">
        <Sidebar />
        <Content />
      </div>
      <StatusBar />
      <Taskbar />

      <ViewMenu />
      <ShowMenu />
      <ImeBar />
    </div>
  );
};

export default App;
